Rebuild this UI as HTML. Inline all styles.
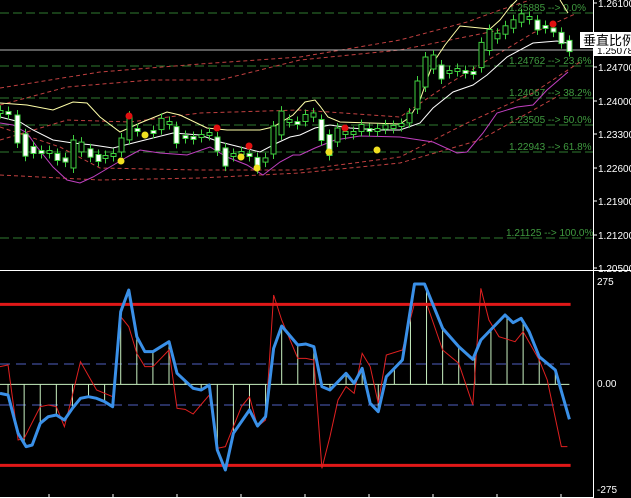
<!DOCTYPE html>
<html><head><meta charset="utf-8"><style>
html,body{margin:0;padding:0;background:#000;width:631px;height:498px;overflow:hidden}
svg{display:block}
text{font-family:"Liberation Sans",sans-serif;font-size:10px;fill:#fff}
</style></head><body>
<svg id="s" width="631" height="498" xmlns="http://www.w3.org/2000/svg">
<rect width="631" height="498" fill="#000"/>
<g id="fib" stroke="#2f7a2f" stroke-width="1" stroke-dasharray="9,4">
<line x1="0" y1="13" x2="593" y2="13"/><line x1="0" y1="66" x2="593" y2="66"/>
<line x1="0" y1="98" x2="593" y2="98"/><line x1="0" y1="125" x2="593" y2="125"/>
<line x1="0" y1="152" x2="593" y2="152"/><line x1="0" y1="238" x2="593" y2="238"/>
</g>
<g style="font-family:'Liberation Sans',sans-serif;font-size:10px">
<text x="509" y="11" style="fill:#3f9a3f">1.25885 --&gt; 0.0%</text>
<text x="509" y="64" style="fill:#3f9a3f">1.24762 --&gt; 23.6%</text>
<text x="509" y="96" style="fill:#3f9a3f">1.24067 --&gt; 38.2%</text>
<text x="509" y="123" style="fill:#3f9a3f">1.23505 --&gt; 50.0%</text>
<text x="509" y="150" style="fill:#3f9a3f">1.22943 --&gt; 61.8%</text>
<text x="506" y="236" style="fill:#3f9a3f">1.21125 --&gt; 100.0%</text>
</g>
<g fill="none" stroke="#c04040" stroke-width="1" stroke-dasharray="4,3">
<polyline points="0,88 100,72 200,64 300,57 400,40 467,22 500,10 530,0"/>
<polyline points="0,127 60,147 100,168 200,170 300,170 400,157 467,123 533,93 580,62"/>
<polyline points="0,140 67,120 130,122 200,113 300,110 400,117 450,83 483,63 533,33 575,14"/>
<polyline points="0,105 67,87 150,80 220,80 300,60 400,50 500,30"/>
<polyline points="0,175 100,180 200,178 300,173 400,163 480,140 560,95"/>
</g>
<line x1="0" y1="50" x2="593" y2="50" stroke="#b8b8b8" stroke-width="1"/>
<polyline fill="none" stroke="#ffffa8" stroke-width="1" points="0,103 27,105 53,110 73,102 87,103 100,117 120,132 140,123 167,112 180,115 207,128 227,130 260,130 273,127 293,115 305,102 315,100 320,106 328,117 340,122 370,123 400,124 410,117 420,100 433,63 445,45 460,26 480,28 490,29 500,20 510,7 517,0"/>
<polyline fill="none" stroke="#ffffa8" stroke-width="1" points="560,0 568,13"/>
<polyline fill="none" stroke="#fff" stroke-width="1" points="0,117 20,122 33,130 53,140 73,143 93,145 113,148 133,143 153,138 173,133 200,135 220,142 240,147 260,152 277,143 290,137 300,135 315,128 330,125 350,128 380,130 400,130 420,123 433,108 453,92 473,85 487,75 507,57 533,43 557,41 567,43"/>
<polyline fill="none" stroke="#c040c0" stroke-width="1" points="0,123 13,125 27,133 37,147 53,167 67,180 80,183 93,177 110,167 127,157 140,150 160,153 187,155 210,147 227,157 247,165 263,175 280,162 293,155 300,155 315,148 335,140 360,136 400,137 433,142 457,153 467,152 483,133 497,113 517,107 533,105 547,90 568,72"/>
<g id="candles"></g>
<g id="dots"></g>
<line x1="0" y1="270.5" x2="631" y2="270.5" stroke="#fff" stroke-width="1"/>
<line x1="593.5" y1="0" x2="593.5" y2="498" stroke="#fff" stroke-width="1"/>
<line x1="0" y1="364" x2="570" y2="364" stroke="#5060c0" stroke-dasharray="10,6"/>
<line x1="0" y1="405" x2="570" y2="405" stroke="#5060c0" stroke-dasharray="10,6"/>
<g id="hist" transform="translate(0,270) scale(0.4024,0.33333)"></g>
<g transform="translate(0,270) scale(0.4024,0.33333)">
<line x1="0" y1="103" x2="1418" y2="103" stroke="#e01818" stroke-width="3" vector-effect="non-scaling-stroke"/>
<line x1="0" y1="586" x2="1418" y2="586" stroke="#e01818" stroke-width="3" vector-effect="non-scaling-stroke"/>
<polyline fill="none" stroke="#e02020" stroke-width="1" vector-effect="non-scaling-stroke" points="0,290 20,285 45,510 60,505 100,410 120,405 140,410 160,470 175,400 200,275 240,360 280,380 300,140 320,170 340,250 360,290 380,290 420,240 440,415 460,418 480,432 520,375 540,535 560,530 600,410 620,380 640,470 660,450 680,75 700,150 740,265 760,265 780,270 800,595 820,500 840,390 860,350 880,370 900,250 920,290 940,400 960,255 1000,240 1030,100 1060,100 1100,240 1140,280 1175,405 1195,55 1215,150 1240,200 1280,215 1300,185 1340,270 1360,330 1395,530 1410,530"/>
<polyline id="blue" fill="none" stroke="#3a90e8" stroke-width="3" stroke-linejoin="round" vector-effect="non-scaling-stroke" points="0,370 20,375 45,490 65,530 80,525 100,460 120,440 140,435 160,450 180,415 200,385 220,380 240,385 260,395 280,410 300,125 320,60 340,200 360,245 380,245 420,215 440,310 480,355 500,360 520,345 540,540 560,600 580,490 620,420 640,468 660,440 680,235 700,168 740,225 760,222 780,230 800,350 820,360 860,310 880,340 900,295 920,400 940,425 960,320 1000,270 1030,42 1055,42 1100,175 1140,230 1175,268 1195,210 1255,135 1275,158 1295,145 1315,185 1340,260 1380,300 1415,448"/>
</g>
<line x1="0" y1="497.5" x2="593" y2="497.5" stroke="#fff"/>
<g stroke="#fff"><line x1="49" y1="494" x2="49" y2="498"/><line x1="113" y1="494" x2="113" y2="498"/><line x1="177" y1="494" x2="177" y2="498"/><line x1="241" y1="494" x2="241" y2="498"/><line x1="305" y1="494" x2="305" y2="498"/><line x1="369" y1="494" x2="369" y2="498"/><line x1="433" y1="494" x2="433" y2="498"/><line x1="497" y1="494" x2="497" y2="498"/><line x1="561" y1="494" x2="561" y2="498"/></g>
<g stroke="#fff"><line x1="593" y1="3" x2="597" y2="3"/><line x1="593" y1="67" x2="597" y2="67"/><line x1="593" y1="101" x2="597" y2="101"/><line x1="593" y1="134" x2="597" y2="134"/><line x1="593" y1="168" x2="597" y2="168"/><line x1="593" y1="201" x2="597" y2="201"/><line x1="593" y1="235" x2="597" y2="235"/><line x1="593" y1="268" x2="597" y2="268"/></g>
<text x="598" y="7">1.26100</text>
<text x="598" y="71">1.24700</text>
<text x="598" y="105">1.24000</text>
<text x="598" y="138">1.23300</text>
<text x="598" y="172">1.22600</text>
<text x="598" y="205">1.21900</text>
<text x="598" y="239">1.21200</text>
<text x="598" y="272">1.20500</text>
<rect x="594" y="45" width="37" height="11" fill="#fff"/>
<text x="597" y="54" style="fill:#000">1.25078</text>
<rect x="580" y="32" width="51" height="16" fill="#fff"/>
<text x="583" y="45" style="font-family:'Liberation Sans','Noto Sans CJK SC',sans-serif;font-size:13px;fill:#000">垂直比例</text>
<text x="597" y="285">275</text>
<text x="597" y="387">0.00</text>
<text x="597" y="493">-275</text>
</svg>
<script>
(function(){
var NS="http://www.w3.org/2000/svg";
function el(t,a,p){var e=document.createElementNS(NS,t);for(var k in a)e.setAttribute(k,a[k]);p.appendChild(e);return e;}
var mids=[[0,112],[8,113],[17,129],[25,145],[33,150],[41,152],[49,152],[57,157],[65,160],[73,154],[81,147],[90,153],[98,158],[105,157],[113,155],[121,145],[129,128],[137,130],[153,132],[161,124],[169,123],[176,135],[185,137],[193,138],[201,136],[209,134],[217,144],[225,157],[233,155],[241,153],[249,155],[257,163],[265,160],[273,140],[281,123],[289,121],[297,123],[305,118],[313,115],[321,130],[329,145],[337,135],[345,133],[353,133],[361,128],[369,130],[377,130],[385,127],[393,127],[401,125],[409,118],[417,95],[425,72],[433,62],[441,72],[449,72],[457,70],[465,72],[473,73],[481,55],[489,40],[497,36],[505,30],[513,24],[521,18],[529,18],[537,25],[545,27],[553,30],[561,38],[569,46]];
var cg=document.getElementById("candles");
for(var i=0;i<mids.length;i++){var x=mids[i][0],m=mids[i][1];var prev=i?mids[i-1][1]:m;
var big=Math.abs(m-prev);var h=Math.max(3,Math.min(30,big*1.4));
var up=m<=prev;
var t0=m-h/2,b0=m+h/2;
if(x==17){t0=115;b0=143;up=false}
if(x==73||x==273||x==417){t0=m-14;b0=m+14;}
el("line",{x1:x+0.5,y1:t0-5,x2:x+0.5,y2:b0+5,stroke:"#40d040"},cg);
el("rect",{x:x-2,y:t0,width:5,height:b0-t0,fill:up?"#000":"#fff",stroke:"#40d040","stroke-width":1},cg);}
var dg=document.getElementById("dots");
[[129,116],[217,128],[249,146],[345,128],[553,24]].forEach(function(d){el("circle",{cx:d[0],cy:d[1],r:3.5,fill:"#e01010"},dg)});
[[121,161],[145,135],[257,168],[329,152],[377,150],[241,157]].forEach(function(d){el("circle",{cx:d[0],cy:d[1],r:3.5,fill:"#f0e020"},dg)});
var pts=document.getElementById("blue").getAttribute("points").trim().split(/\s+/).map(function(s){return s.split(",").map(Number)});
function val(x){for(var i=1;i<pts.length;i++){if(x<=pts[i][0]){var a=pts[i-1],b=pts[i];return a[1]+(b[1]-a[1])*(x-a[0])/(b[0]-a[0]);}}return pts[pts.length-1][1];}
var hg=document.getElementById("hist");var Z=343;
var path="";
for(var xx=20;xx<=1415;xx+=40){var v=val(xx);path+="M"+xx+" "+Z+"V"+v;}
path+="M0 "+Z+"H1415";
el("path",{d:path,stroke:"#c8f0c0","stroke-width":1,fill:"none","vector-effect":"non-scaling-stroke"},hg);
})();
</script>
</body></html>
